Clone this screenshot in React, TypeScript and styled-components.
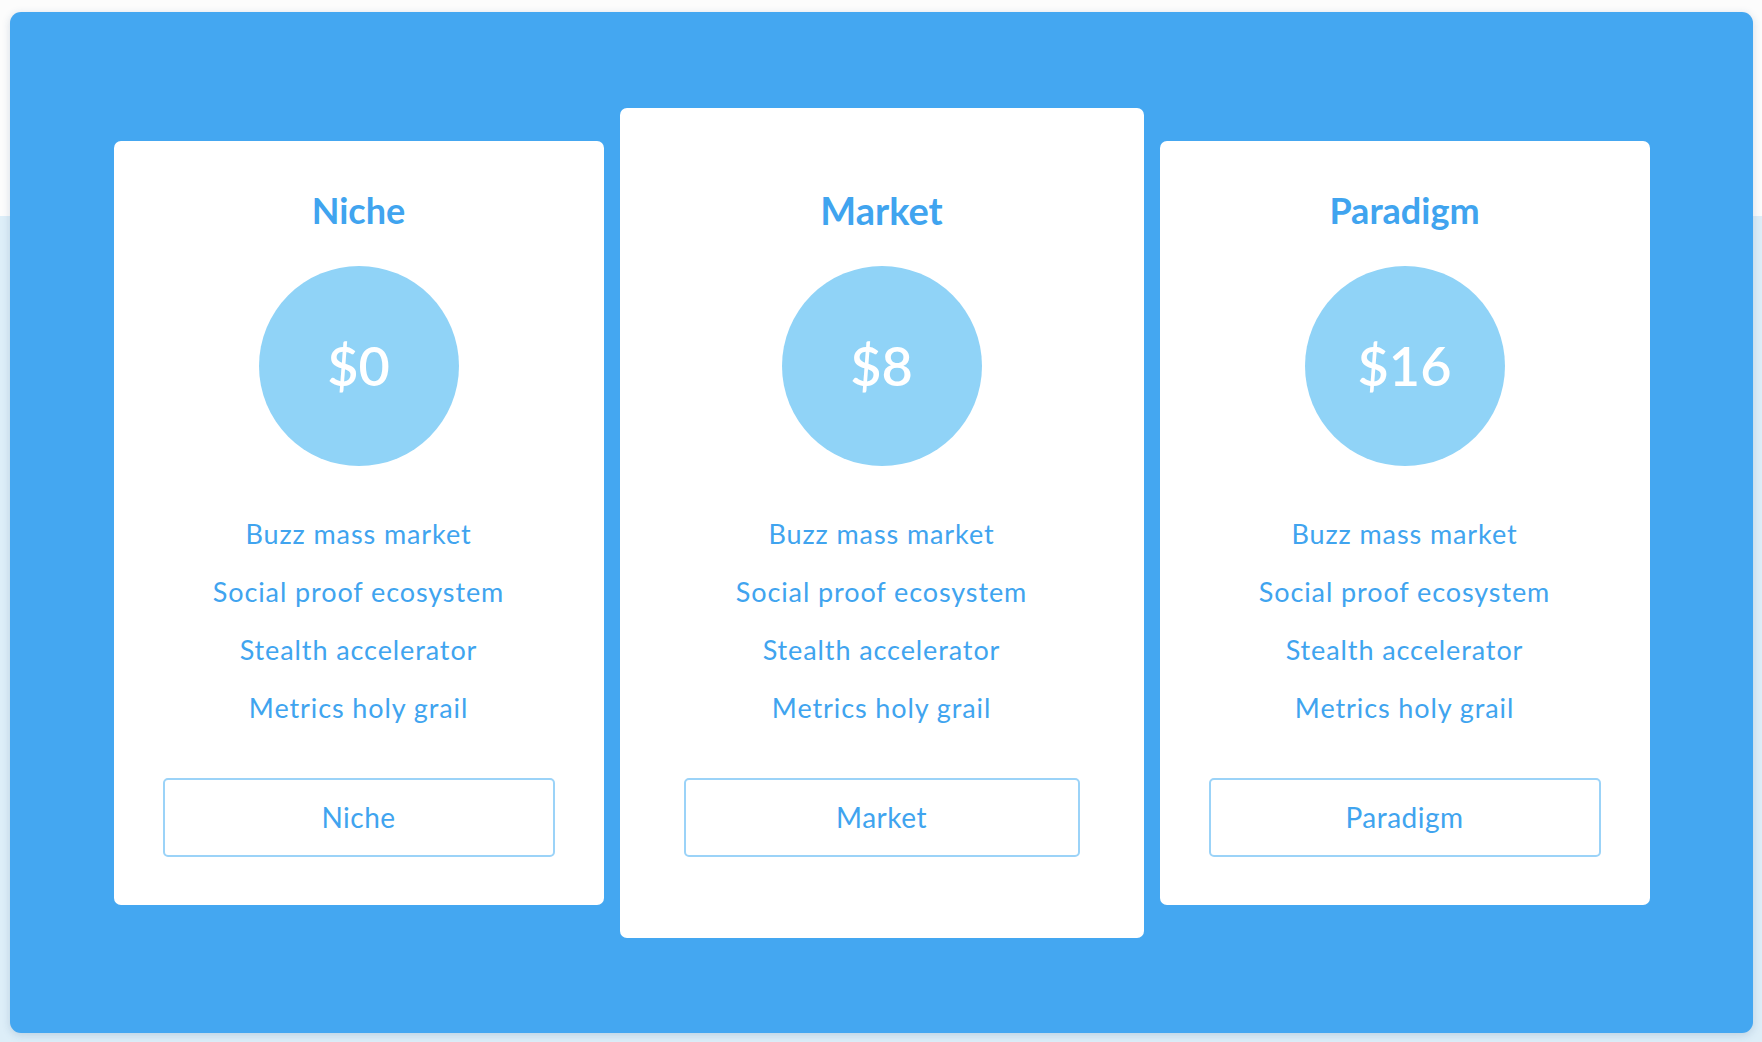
import React from "react";
import styled, { createGlobalStyle } from "styled-components";

const GlobalStyle = createGlobalStyle`
  html, body {
    margin: 0;
    padding: 0;
  }
  body {
    font-family: Lato, "Open Sans", sans-serif;
    background: linear-gradient(to bottom, #fcfcfc 0, #fcfcfc 216px, #ddeef8 216px, #ddeef8 100%);
    min-height: 1042px;
  }
  * { box-sizing: border-box; }
`;

const Page = styled.div`
  padding: 12px 9px 9px 10px;
  height: 1042px;
`;

const Panel = styled.section`
  height: 1021px;
  background: #44a7f1;
  border-radius: 11px;
  box-shadow: 0 2px 8px rgba(40, 80, 120, 0.18);
  display: flex;
  align-items: center;
  justify-content: center;
`;

const Row = styled.div`
  display: flex;
  align-items: center;
  gap: 16px;
`;

const Card = styled.article<{ $featured?: boolean }>`
  background: #ffffff;
  border-radius: 7px;
  width: ${(p) => (p.$featured ? "524px" : "490px")};
  padding: ${(p) => (p.$featured ? "80px 64px 81px" : "47px 49px 48px")};
  display: flex;
  flex-direction: column;
  align-items: center;
`;

const Title = styled.h2<{ $featured?: boolean }>`
  margin: 0;
  font-size: ${(p) => (p.$featured ? "38px" : "36px")};
  line-height: 44px;
  font-weight: 700;
  color: #40a4ef;
`;

const PriceCircle = styled.div`
  margin-top: 34px;
  width: 200px;
  height: 200px;
  border-radius: 50%;
  background: #90d3f7;
  display: flex;
  align-items: center;
  justify-content: center;
  color: #ffffff;
  font-size: 54px;
  font-weight: 600;
  line-height: 1;
`;

const Features = styled.ul`
  list-style: none;
  margin: 39px 0 0;
  padding: 0;
  text-align: center;
`;

const Feature = styled.li`
  font-size: 27px;
  line-height: 58px;
  letter-spacing: 0.9px;
  color: #40a4ef;
  white-space: nowrap;
`;

const ChooseButton = styled.button`
  margin-top: 41px;
  width: 100%;
  height: 79px;
  background: #ffffff;
  border: 2px solid #9bd3f8;
  border-radius: 5px;
  font-family: Lato, "Open Sans", sans-serif;
  font-size: 28px;
  letter-spacing: 0.5px;
  color: #40a4ef;
  cursor: pointer;
`;

type Plan = { name: string; price: string; featured?: boolean };

const plans: Plan[] = [
  { name: "Niche", price: "$0" },
  { name: "Market", price: "$8", featured: true },
  { name: "Paradigm", price: "$16" },
];

const features = [
  "Buzz mass market",
  "Social proof ecosystem",
  "Stealth accelerator",
  "Metrics holy grail",
];

export default function App() {
  return (
    <>
      <GlobalStyle />
      <Page>
        <Panel>
          <Row>
            {plans.map((plan) => (
              <Card key={plan.name} $featured={plan.featured}>
                <Title $featured={plan.featured}>{plan.name}</Title>
                <PriceCircle>{plan.price}</PriceCircle>
                <Features>
                  {features.map((f) => (
                    <Feature key={f}>{f}</Feature>
                  ))}
                </Features>
                <ChooseButton>{plan.name}</ChooseButton>
              </Card>
            ))}
          </Row>
        </Panel>
      </Page>
    </>
  );
}
